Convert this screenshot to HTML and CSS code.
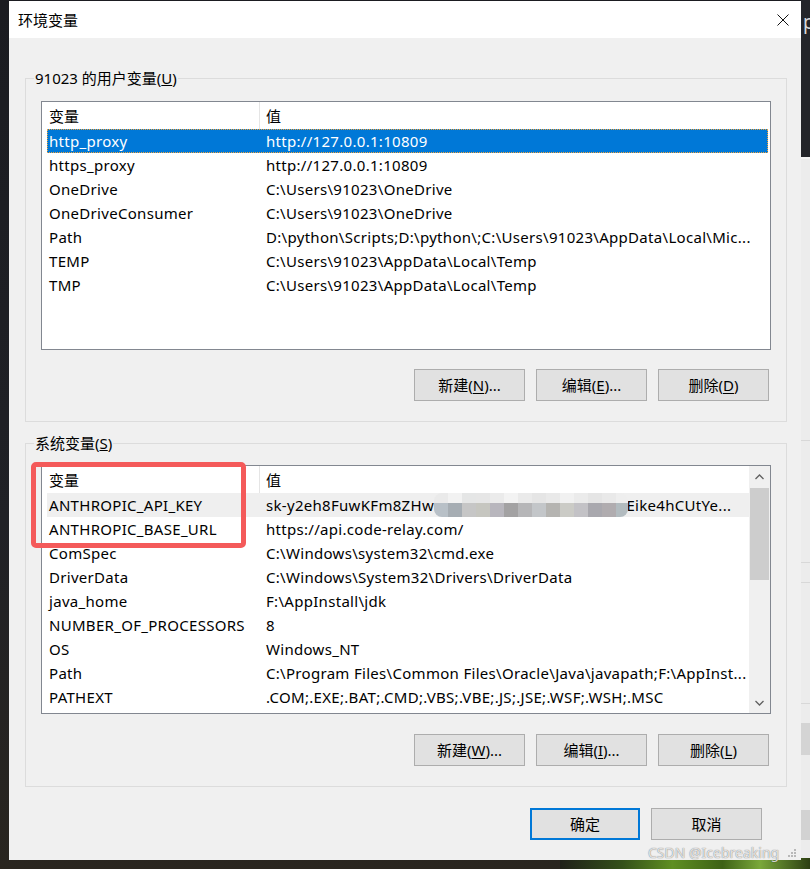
FILE: index.html
```html
<!DOCTYPE html>
<html lang="zh-CN">
<head>
    <meta charset="UTF-8">
    <meta name="viewport" content="width=device-width, initial-scale=1.0">
    <title>环境变量</title>

    <link rel="stylesheet" href="styles.css">
</head>
<body>
    <div class="desktop">
        <!-- window peeking out behind the dialog -->
        <div class="behind">
            <div class="behind-top"><span class="behind-letter">p</span></div>
            <div class="behind-panel"></div>
        </div>
        <div class="grass"></div>

        <div class="dialog">
            <div class="titlebar">
                <span class="title">环境变量</span>
                <div class="close">
                    <svg width="12" height="12" viewBox="0 0 12 12"><path d="M0.5 0.5L11.5 11.5M11.5 0.5L0.5 11.5" stroke="#111" stroke-width="1" fill="none"/></svg>
                </div>
            </div>

            <div class="dialog-body">
                <fieldset class="group">
                    <legend>91023 的用户变量(<u>U</u>)</legend>
                    <div class="listview">
                        <div class="lv-content">
                            <div class="lv-head">
                                <span class="col-name">变量</span>
                                <span class="col-value">值</span>
                            </div>
                            <div class="lv-row selected"><span class="col-name">http_proxy</span><span class="col-value">http://127.0.0.1:10809</span></div>
                            <div class="lv-row"><span class="col-name">https_proxy</span><span class="col-value">http://127.0.0.1:10809</span></div>
                            <div class="lv-row"><span class="col-name">OneDrive</span><span class="col-value">C:\Users\91023\OneDrive</span></div>
                            <div class="lv-row"><span class="col-name">OneDriveConsumer</span><span class="col-value">C:\Users\91023\OneDrive</span></div>
                            <div class="lv-row"><span class="col-name">Path</span><span class="col-value">D:\python\Scripts;D:\python\;C:\Users\91023\AppData\Local\Mic...</span></div>
                            <div class="lv-row"><span class="col-name">TEMP</span><span class="col-value">C:\Users\91023\AppData\Local\Temp</span></div>
                            <div class="lv-row"><span class="col-name">TMP</span><span class="col-value">C:\Users\91023\AppData\Local\Temp</span></div>
                        </div>
                    </div>
                    <div class="group-buttons">
                        <button class="btn">新建(<u>N</u>)...</button>
                        <button class="btn">编辑(<u>E</u>)...</button>
                        <button class="btn">删除(<u>D</u>)</button>
                    </div>
                </fieldset>

                <fieldset class="group group-system">
                    <legend>系统变量(<u>S</u>)</legend>
                    <div class="listview">
                        <div class="lv-content lv-content-scroll">
                            <div class="lv-head">
                                <span class="col-name">变量</span>
                                <span class="col-value">值</span>
                            </div>
                            <div class="lv-row hover"><span class="col-name">ANTHROPIC_API_KEY</span><span class="col-value">sk-y2eh8FuwKFm8ZHwr<span class="mosaic"></span>Eike4hCUtYe...</span></div>
                            <div class="lv-row"><span class="col-name">ANTHROPIC_BASE_URL</span><span class="col-value">https://api.code-relay.com/</span></div>
                            <div class="lv-row"><span class="col-name">ComSpec</span><span class="col-value">C:\Windows\system32\cmd.exe</span></div>
                            <div class="lv-row"><span class="col-name">DriverData</span><span class="col-value">C:\Windows\System32\Drivers\DriverData</span></div>
                            <div class="lv-row"><span class="col-name">java_home</span><span class="col-value">F:\AppInstall\jdk</span></div>
                            <div class="lv-row"><span class="col-name">NUMBER_OF_PROCESSORS</span><span class="col-value">8</span></div>
                            <div class="lv-row"><span class="col-name">OS</span><span class="col-value">Windows_NT</span></div>
                            <div class="lv-row"><span class="col-name">Path</span><span class="col-value">C:\Program Files\Common Files\Oracle\Java\javapath;F:\AppInst...</span></div>
                            <div class="lv-row"><span class="col-name">PATHEXT</span><span class="col-value">.COM;.EXE;.BAT;.CMD;.VBS;.VBE;.JS;.JSE;.WSF;.WSH;.MSC</span></div>
                        </div>
                        <div class="scrollbar">
                            <div class="sb-arrow">
                                <svg width="9" height="6" viewBox="0 0 9 6"><path d="M0.5 5L4.5 1L8.5 5" stroke="#606060" stroke-width="1.3" fill="none"/></svg>
                            </div>
                            <div class="sb-track"><div class="sb-thumb"></div></div>
                            <div class="sb-arrow">
                                <svg width="9" height="6" viewBox="0 0 9 6"><path d="M0.5 1L4.5 5L8.5 1" stroke="#606060" stroke-width="1.3" fill="none"/></svg>
                            </div>
                        </div>
                    </div>
                    <div class="group-buttons">
                        <button class="btn">新建(<u>W</u>)...</button>
                        <button class="btn">编辑(<u>I</u>)...</button>
                        <button class="btn">删除(<u>L</u>)</button>
                    </div>
                </fieldset>

                <div class="footer">
                    <button class="btn btn-default">确定</button>
                    <button class="btn">取消</button>
                </div>
            </div>

            <!-- red box drawn around the two ANTHROPIC rows -->
            <div class="mark"></div>

            <svg class="grip" width="14" height="12" viewBox="0 0 14 12">
                <rect x="10" y="2" width="2" height="2" fill="#b8b8b8"/>
                <rect x="7" y="5" width="2" height="2" fill="#b8b8b8"/>
                <rect x="10" y="5" width="2" height="2" fill="#b8b8b8"/>
                <rect x="4" y="8" width="2" height="2" fill="#b8b8b8"/>
                <rect x="7" y="8" width="2" height="2" fill="#b8b8b8"/>
                <rect x="10" y="8" width="2" height="2" fill="#b8b8b8"/>
            </svg>
        </div>

        <div class="watermark">CSDN @Icebreaking</div>
    </div>
</body>
</html>
```

FILE: styles.css
```css
*{
    box-sizing: border-box;
}

body{
    margin: 0;
    background-color: #1d1e22;
    font-family: "Noto Sans", "Noto Sans CJK SC", sans-serif;
    font-size: 15px;
    color: #000;
}

.desktop{
    position: relative;
    width: 810px;
    height: 869px;
    overflow: hidden;
    background: linear-gradient(to bottom, #1b1c21 0%, #202126 60%, #29251f 100%);
}

/* the other window on the right */
.behind{
    position: absolute;
    left: 801px;
    top: 0;
    width: 9px;
    height: 858px;
    display: flex;
    flex-direction: column;
}

.behind-top{
    height: 157px;
    background-color: #24252a;
}

.behind-letter{
    display: block;
    margin-top: 12px;
    margin-left: 2px;
    color: #d8d8d8;
    font-size: 19px;
    line-height: 20px;
}

.behind-panel{
    flex: 1;
    background:
        linear-gradient(to bottom,
            #f4f4f4 0 2px, #ececec 2px 283px, #d8d8d8 283px 284px,
            #ececec 284px 405px, #d8d8d8 405px 406px, #ececec 406px 425px,
            #d8d8d8 425px 426px, #ececec 426px 546px, #d8d8d8 546px 547px,
            #ececec 547px 566px, #d4d4d4 566px 598px, #ececec 598px 653px,
            #d2d2d2 653px 683px, #ececec 683px);
}

.grass{
    position: absolute;
    left: 560px;
    top: 858px;
    width: 250px;
    height: 11px;
    background: linear-gradient(to right, #1f2019 0%, #34501a 25%, #5f8f22 45%, #3e6216 65%, #7aa83a 80%, #2c3f12 100%);
}

/* dialog window */
.dialog{
    position: absolute;
    left: 9px;
    top: 1px;
    width: 792px;
    height: 859px;
    background-color: #f0f0f0;
    display: flex;
    flex-direction: column;
}

.titlebar{
    height: 37px;
    background-color: #fff;
    display: flex;
    align-items: center;
    justify-content: space-between;
    padding-left: 9px;
}

.title{
    font-size: 15px;
    line-height: 20px;
}

.close{
    width: 36px;
    height: 37px;
    display: flex;
    align-items: center;
    justify-content: center;
}

.close svg{
    display: block;
}

.dialog-body{
    padding: 30px 14px 0 16px;
}

.group{
    margin: 0;
    padding: 13px 15px 20px 8px;
    border: 1px solid #dcdcdc;
    min-width: 0;
}

.group-system{
    margin-top: 11px;
    padding-top: 12px;
}

.group legend{
    padding: 0 1px;
    font-size: 15px;
    line-height: 20px;
}

/* list view */
.listview{
    margin-left: 7px;
    height: 249px;
    border: 1px solid #828790;
    background-color: #fff;
    display: flex;
    overflow: hidden;
}

.lv-content{
    flex: 1;
    min-width: 0;
    padding: 0 2px 0 5px;
}

.lv-content-scroll{
    padding-right: 0;
}

.lv-head,
.lv-row{
    display: flex;
    white-space: nowrap;
}

.lv-head{
    height: 27px;
    padding-top: 2px;
    line-height: 25px;
}

.lv-head .col-name{
    border-right: 1px solid #e5e5e5;
    margin-top: -2px;
    padding-top: 2px;
}

.lv-row{
    height: 24px;
    line-height: 24px;
    letter-spacing: 0.3px;
}

.col-name{
    width: 213px;
    flex-shrink: 0;
    padding-left: 2px;
}

.col-value{
    flex: 1;
    min-width: 0;
    padding-left: 6px;
    overflow: hidden;
}

.lv-row.selected{
    background-color: #0078d7;
    color: #fff;
    outline: 1px dotted #f2a33a;
    outline-offset: -1px;
}

.lv-row.hover{
    background-color: #efefef;
}

/* pixelated cover over the secret part of the key */
.mosaic{
    display: inline-block;
    vertical-align: top;
    width: 194px;
    height: 24px;
    margin-left: -6px;
    margin-right: -2px;
    border-radius: 8px;
    filter: blur(0.6px);
    background:
        linear-gradient(to right,
            #eaeaea 0 14px, #f2f2f2 14px 28px, #e5e6e6 28px 42px, #e6e6e6 42px 56px,
            #ebebeb 56px 70px, #f3f3f3 70px 84px, #eaeaea 84px 98px, #e5e5e5 98px 112px,
            #e9e9e9 112px 126px, #f1f1f1 126px 140px, #ebebeb 140px 154px, #e5e5e5 154px 168px,
            #e9e9e9 168px 182px, #eeeeee 182px) top / 100% 10px no-repeat,
        linear-gradient(to right,
            #b8c0c7 0 14px, #a6adb3 14px 28px, #c6c6c6 28px 42px, #c6c6c0 42px 56px,
            #b8b6bd 56px 70px, #a3a2a3 70px 84px, #b6b6b8 84px 98px, #c3c6c9 98px 112px,
            #b5b4b1 112px 126px, #cbcbc6 126px 140px, #c3c2c6 140px 154px, #a9a8ae 154px 168px,
            #b0acaf 168px 182px, #b2bbbf 182px) bottom / 100% 14px no-repeat;
}

.scrollbar{
    width: 21px;
    flex-shrink: 0;
    display: flex;
    flex-direction: column;
    background-color: #f0f0f0;
}

.sb-arrow{
    height: 21px;
    display: flex;
    align-items: center;
    justify-content: center;
}

.sb-arrow svg{
    display: block;
}

.sb-track{
    flex: 1;
    padding: 1px 1px 0 1px;
}

.sb-thumb{
    height: 92px;
    background-color: #cdcdcd;
}

/* buttons */
.group-buttons{
    display: flex;
    justify-content: flex-end;
    gap: 11px;
    margin-top: 19px;
    margin-right: 2px;
}

.group-system .group-buttons{
    margin-top: 20px;
}

.btn{
    width: 111px;
    height: 32px;
    padding: 0;
    background-color: #e1e1e1;
    border: 1px solid #adadad;
    border-radius: 0;
    font-family: "Noto Sans", "Noto Sans CJK SC", sans-serif;
    font-size: 15px;
    line-height: 20px;
    color: #000;
}

.btn u{
    text-underline-offset: 2px;
}

.footer{
    display: flex;
    justify-content: flex-end;
    gap: 11px;
    margin-top: 21px;
    padding-right: 25px;
}

.btn-default{
    width: 110px;
    border: 2px solid #0078d7;
}

.mark{
    position: absolute;
    left: 22px;
    top: 461px;
    width: 215px;
    height: 86px;
    border: 5px solid #f45a5a;
    border-radius: 5px;
}

.grip{
    position: absolute;
    right: 3px;
    bottom: 1px;
}

.watermark{
    position: absolute;
    left: 648px;
    top: 844px;
    font-family: "Noto Sans", sans-serif;
    font-size: 14px;
    line-height: 18px;
    color: rgba(255, 255, 255, 0.8);
    text-shadow: 0 0 1px rgba(0, 0, 0, 0.5), 0 0 1px rgba(0, 0, 0, 0.2);
}
```
